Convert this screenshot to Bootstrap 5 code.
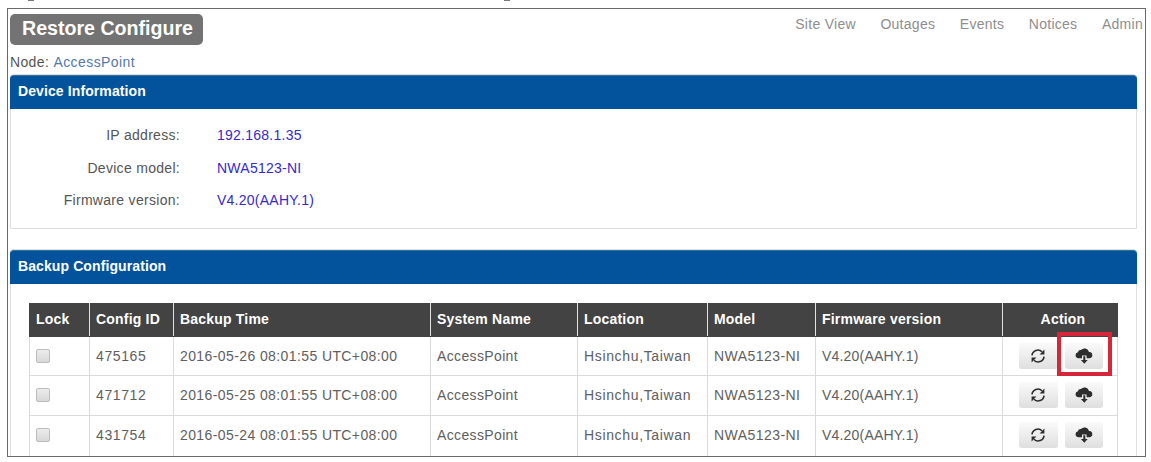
<!DOCTYPE html>
<html lang="en">
<head>
    <meta charset="UTF-8">
    <meta name="viewport" content="width=device-width, initial-scale=1.0">
    <title>Restore Configure</title>
    <link rel="stylesheet" href="https://cdn.jsdelivr.net/npm/bootstrap@5.3.0/dist/css/bootstrap.min.css">
    <style>
        body { font-family: "Liberation Sans", Arial, sans-serif; font-size: 14px; line-height: 20px; letter-spacing: .36px; color: #555; height: 462px; }
        .caption-tail { height: 8px; padding-left: 28px; }
        .caption-tail span { width: 6px; height: 1px; margin-right: 470px; background: #777; }
        .page-frame { width: 1139px; height: 449px; margin-left: 7px; padding: 5px 0 0 2px; border: 1px solid #6a6a6a; }
        .page-title { width: 193px; height: 31px; padding-left: 12px; font-size: 19.6px; line-height: 29px; letter-spacing: 0; background: #737373; border-radius: 5px; }
        .top-menu { gap: 24.5px; padding-right: 2px; letter-spacing: .28px; }
        .top-menu a { color: #8e8e8e; }
        .node-line { height: 29px; padding-top: 7px; }
        .node-line a { color: #5579a6; letter-spacing: .42px; }
        .panel { width: 1127px; border-color: #dedede; border-radius: 4px 4px 0 0; }
        .panel > .card-header { height: 34px; margin: 0 -1px; padding: 0 0 0 8px; line-height: 30px; letter-spacing: .1px; background: #03529c; border: 0; border-top: 1px solid #33729f; border-radius: 4px 4px 0 0; }
        .panel-info { height: 155px; margin-bottom: 20px; }
        .panel-info .card-body { padding: 10px 0 0; }
        .panel-backup { height: 208px; border-bottom: 0; }
        .panel-backup .card-body { padding: 19px 0 0 18px; }
        .info-row { height: 32.5px; }
        .info-label { width: 169px; margin-right: 37px; letter-spacing: .3px; }
        .info-value { color: #382ac8; letter-spacing: .25px; }
        .config-table { width: 1088px; table-layout: fixed; color: #606060; }
        .config-table > :not(caption) > * > * { padding: 0 0 0 6px; border: 1px solid #dadada; color: inherit; background: none; }
        .config-table thead th { height: 33px; color: #fff; background: #434343; border-color: #434343 #e3e3e3; letter-spacing: .2px; line-height: 30px; vertical-align: top; }
        .config-table thead th:first-child { border-left-color: #434343; }
        .config-table thead th:last-child { border-right-color: #434343; }
        .config-table tbody td { height: 39.5px; }
        .config-table tbody tr:last-child td { height: 42px; padding-bottom: 2px; border-bottom: 0; }
        .config-table td:nth-child(2) { letter-spacing: .6px; }
        .config-table td:nth-child(3) { letter-spacing: .4px; }
        .config-table td:nth-child(5) { letter-spacing: .65px; }
        .config-table td:nth-child(6) { letter-spacing: .45px; }
        .config-table td:nth-child(7) { letter-spacing: .2px; }
        .lock-box { width: 14px; height: 14px; margin: 0; border-color: #bcbcbc; border-radius: 2px !important; background-image: linear-gradient(#ececec, #d8d8d8); display: block; }
        .action-set { gap: 7px; padding-left: 10px; }
        .action-set .btn { width: 38.5px; height: 26px; color: #2d2d2d; border: 0; border-radius: 3px; background: linear-gradient(#fafafa, #dfdfdf); }
        .action-set svg { display: block; }
        .callout-box { width: 55px; height: 44px; top: -11px; left: -8px; border: 4px solid #d6263a; pointer-events: none; }
    </style>
</head>
<body class="bg-white overflow-hidden">
    <svg class="d-none">
        <symbol id="icon-refresh" viewBox="0 0 16 16">
            <path d="M2 7.4A5.9 5.9 0 0 1 12 3.7M14 8.6A5.9 5.9 0 0 1 4 12.3" fill="none" stroke="currentColor" stroke-width="1.6"/>
            <path d="M14.4 1.6v5H9.6zM1.6 14.4v-5h4.8z" fill="currentColor"/>
        </symbol>
        <symbol id="icon-restore" viewBox="0 0 18 16">
            <path d="M3.6 10.3A3.1 3.1 0 0 1 2.9 4.2 2.8 2.8 0 0 1 6 2.1 4.6 4.6 0 0 1 14 4.1a3.1 3.1 0 0 1 .4 6.2H11.6V7.4H7v2.9z" fill="currentColor"/>
            <path d="M8.3 8.2h2v3.9h2.4L9.3 15.8 5.9 12.1h2.4z" fill="currentColor"/>
        </symbol>
    </svg>

    <div class="caption-tail d-flex"><span></span><span></span></div>

    <div class="page-frame overflow-hidden">
        <header class="d-flex justify-content-between align-items-start">
            <h1 class="page-title text-white fw-bold mb-0">Restore Configure</h1>
            <nav class="top-menu d-flex">
                <a class="text-decoration-none" href="#">Site View</a>
                <a class="text-decoration-none" href="#">Outages</a>
                <a class="text-decoration-none" href="#">Events</a>
                <a class="text-decoration-none" href="#">Notices</a>
                <a class="text-decoration-none" href="#">Admin</a>
            </nav>
        </header>
        <div class="node-line">Node: <a class="text-decoration-none" href="#">AccessPoint</a></div>

        <section class="card panel panel-info">
            <div class="card-header text-white fw-bold">Device Information</div>
            <div class="card-body">
                <div class="info-row d-flex align-items-center">
                    <div class="info-label text-end">IP address:</div>
                    <div class="info-value">192.168.1.35</div>
                </div>
                <div class="info-row d-flex align-items-center">
                    <div class="info-label text-end">Device model:</div>
                    <div class="info-value">NWA5123-NI</div>
                </div>
                <div class="info-row d-flex align-items-center">
                    <div class="info-label text-end">Firmware version:</div>
                    <div class="info-value">V4.20(AAHY.1)</div>
                </div>
            </div>
        </section>

        <section class="card panel panel-backup">
            <div class="card-header text-white fw-bold">Backup Configuration</div>
            <div class="card-body">
                <table class="table config-table mb-0 align-middle">
                    <colgroup>
                        <col width="60"><col width="84"><col width="257"><col width="147">
                        <col width="130"><col width="108"><col width="187"><col width="115">
                    </colgroup>
                    <thead>
                        <tr>
                            <th>Lock</th>
                            <th>Config ID</th>
                            <th>Backup Time</th>
                            <th>System Name</th>
                            <th>Location</th>
                            <th>Model</th>
                            <th>Firmware version</th>
                            <th class="text-center">Action</th>
                        </tr>
                    </thead>
                    <tbody id="config-rows"></tbody>
                </table>
            </div>
        </section>
    </div>

    <script src="https://cdn.jsdelivr.net/npm/bootstrap@5.3.0/dist/js/bootstrap.bundle.min.js"></script>
    <script>
        const configs = [
            { id: "475165", time: "2016-05-26 08:01:55 UTC+08:00", highlight: true },
            { id: "471712", time: "2016-05-25 08:01:55 UTC+08:00" },
            { id: "431754", time: "2016-05-24 08:01:55 UTC+08:00" }
        ];

        document.getElementById("config-rows").innerHTML = configs.map(config => `
            <tr>
                <td><input type="checkbox" class="form-check-input lock-box"></td>
                <td>${config.id}</td>
                <td>${config.time}</td>
                <td>AccessPoint</td>
                <td>Hsinchu,Taiwan</td>
                <td>NWA5123-NI</td>
                <td>V4.20(AAHY.1)</td>
                <td>
                    <div class="action-set d-flex">
                        <button class="btn p-0 d-flex align-items-center justify-content-center"><svg width="16" height="16"><use href="#icon-refresh"/></svg></button>
                        <div class="position-relative">
                            <button class="btn p-0 d-flex align-items-center justify-content-center"><svg width="18" height="16"><use href="#icon-restore"/></svg></button>
                            ${config.highlight ? '<div class="callout-box position-absolute"></div>' : ""}
                        </div>
                    </div>
                </td>
            </tr>`).join("");
    </script>
</body>
</html>
